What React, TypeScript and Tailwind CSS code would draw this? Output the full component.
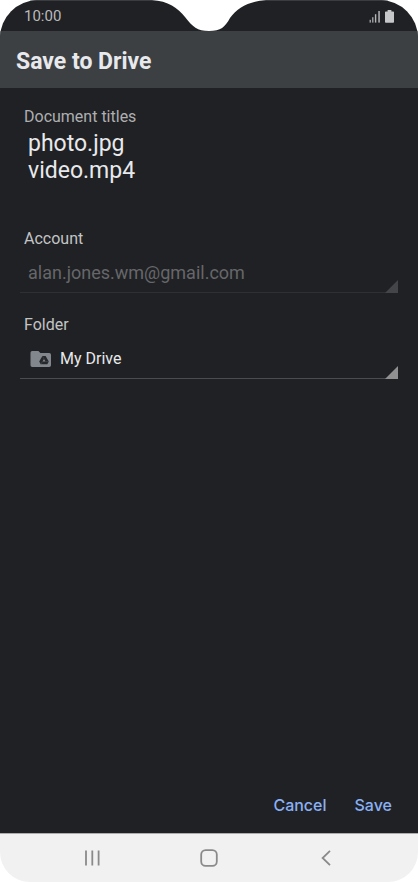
import type { ReactNode } from "react";
import { useState } from "react";

const DOCUMENTS = ["photo.jpg", "video.mp4"];
const ACCOUNTS = ["alan.jones.wm@gmail.com"];
const FOLDERS = ["My Drive"];

function SignalIcon() {
  return (
    <svg width="12" height="13" viewBox="0 0 12 13" fill="#b4b5b6" aria-hidden>
      <rect x="0.6" y="9.8" width="1.2" height="2.8" />
      <rect x="3.2" y="7.2" width="1.2" height="5.4" />
      <rect x="5.9" y="4.2" width="1.4" height="8.4" />
      <rect x="9.3" y="1" width="1.5" height="11.6" />
    </svg>
  );
}

function BatteryIcon() {
  return (
    <svg width="9" height="13" viewBox="0 0 9 13" fill="#c6c7c8" aria-hidden>
      <path d="M2.6 0h3.8v1.4h1.8q.8 0 .8.8v9.8q0 .8-.8.8H.8Q0 12.8 0 12V2.2q0-.8.8-.8h1.8z" />
    </svg>
  );
}

function Notch() {
  return (
    <svg
      className="absolute top-0 left-1/2 -translate-x-1/2"
      width="116"
      height="32"
      viewBox="0 0 116 32"
      fill="#fff"
      aria-hidden
    >
      <path d="M1 0C17 1 27 8 34 17C42 27 46 31 58 31C70 31 74 27 79 18C86 8 98 1 115 0Z" />
    </svg>
  );
}

function DriveFolderIcon() {
  return (
    <svg width="22" height="18" viewBox="0 0 22 18" aria-hidden>
      <path
        d="M2.2 1h6.2l2 2h8.8q1.8 0 1.8 1.8v10.4q0 1.8-1.8 1.8H2.2Q.5 17 .5 15.2V2.8Q.5 1 2.2 1z"
        fill="#82878e"
      />
      <path d="M12.4 6h3.2l3.2 5.6-1.5 2.7H10.7L9.2 11.6z" fill="#26282b" />
      <path d="M14 9l1.5 2.6h-3z" fill="#82878e" />
      <path d="M10.9 14.2l1.5-2.6M15.5 11.6h3.2M14 9L12.5 6.2" stroke="#5b5f64" strokeWidth="0.4" />
    </svg>
  );
}

type SpinnerProps = {
  id: string;
  label: string;
  options: string[];
  disabled?: boolean;
  icon?: ReactNode;
};

function Spinner({ id, label, options, disabled = false, icon }: SpinnerProps) {
  return (
    <div>
      <label htmlFor={id} className="block px-1 text-base leading-5 text-[#c3c4c6]">
        {label}
      </label>
      <div
        className={`relative mt-2 flex h-9 items-center border-b pl-2 ${
          disabled ? "border-[#2f3033]" : "border-[#4b4c4f]"
        }`}
      >
        {icon && <span className="mr-2 ml-0.5 shrink-0 pb-1">{icon}</span>}
        <select
          id={id}
          disabled={disabled}
          className={`h-full min-w-0 flex-1 appearance-none bg-transparent pb-1 outline-none ${
            disabled ? "text-lg text-[#66676a] opacity-100" : "text-base text-[#e8e9eb]"
          }`}
        >
          {options.map((option) => (
            <option key={option}>{option}</option>
          ))}
        </select>
        <svg
          className={`pointer-events-none absolute right-0 -bottom-px ${
            disabled ? "text-[#444548]" : "text-[#909090]"
          }`}
          width="13"
          height="13"
          viewBox="0 0 13 13"
          fill="currentColor"
          aria-hidden
        >
          <path d="M13 0v13H0z" />
        </svg>
      </div>
    </div>
  );
}

function NavBar() {
  return (
    <nav className="flex h-12 shrink-0 items-center justify-center gap-[93px] rounded-b-[30px] bg-[#f1f1f1] text-[#8a8a8a]">
      <button type="button" aria-label="Recent apps" className="flex w-6 justify-center">
        <svg width="16" height="16" viewBox="0 0 16 16" stroke="currentColor" strokeWidth="1.8">
          <path d="M2 .5v15M8.3 .5v15M14.6 .5v15" />
        </svg>
      </button>
      <button type="button" aria-label="Home" className="flex w-6 justify-center">
        <svg width="18" height="18" viewBox="0 0 18 18" fill="none" stroke="currentColor" strokeWidth="1.8">
          <rect x="1.2" y="1.2" width="15.6" height="15.6" rx="4.4" />
        </svg>
      </button>
      <button type="button" aria-label="Back" className="flex w-6 justify-center">
        <svg width="10" height="16" viewBox="0 0 10 16" fill="none" stroke="currentColor" strokeWidth="1.8">
          <path d="M9 .8L1.6 8L9 15.2" />
        </svg>
      </button>
    </nav>
  );
}

export default function App() {
  const [saving, setSaving] = useState(false);

  return (
    <div className="relative flex min-h-screen flex-col bg-white font-[Roboto,sans-serif]">
      <div className="flex flex-1 flex-col overflow-hidden rounded-t-[38px] border-b border-[#acacad] bg-[#202124]">
        <div className="flex h-[31px] shrink-0 items-center justify-between border-t border-[#3a3c3f] px-6">
          <span className="text-[15px] leading-5 text-[#b9babb]">10:00</span>
          <div className="flex items-center gap-1">
            <SignalIcon />
            <BatteryIcon />
          </div>
        </div>
        <Notch />

        <header className="flex h-[57px] shrink-0 items-center bg-[#3d4043] px-4 pt-1">
          <h1 className="text-[23px] leading-7 font-bold text-[#e8e9ec]">Save to Drive</h1>
        </header>

        <main className="flex flex-1 flex-col px-5 pt-[19px]">
          <section className="mb-[45px]">
            <h2 className="px-1 text-base leading-5 text-[#aeafb2]">Document titles</h2>
            <ul className="mt-[3px] px-2 text-[23px] leading-[27px] text-[#e8e9ec]">
              {DOCUMENTS.map((name) => (
                <li key={name}>{name}</li>
              ))}
            </ul>
          </section>

          <div className="flex flex-col gap-[22px]">
            <Spinner id="account" label="Account" options={ACCOUNTS} disabled />
            <Spinner id="folder" label="Folder" options={FOLDERS} icon={<DriveFolderIcon />} />
          </div>
        </main>

        <footer className="flex justify-end gap-7 px-[26px] pb-4 font-[Inter,sans-serif] text-base leading-6 font-medium text-[#8ab0f5]">
          <button type="button" onClick={() => setSaving(false)}>
            Cancel
          </button>
          <button type="button" disabled={saving} onClick={() => setSaving(true)}>
            Save
          </button>
        </footer>
      </div>

      <NavBar />
    </div>
  );
}
